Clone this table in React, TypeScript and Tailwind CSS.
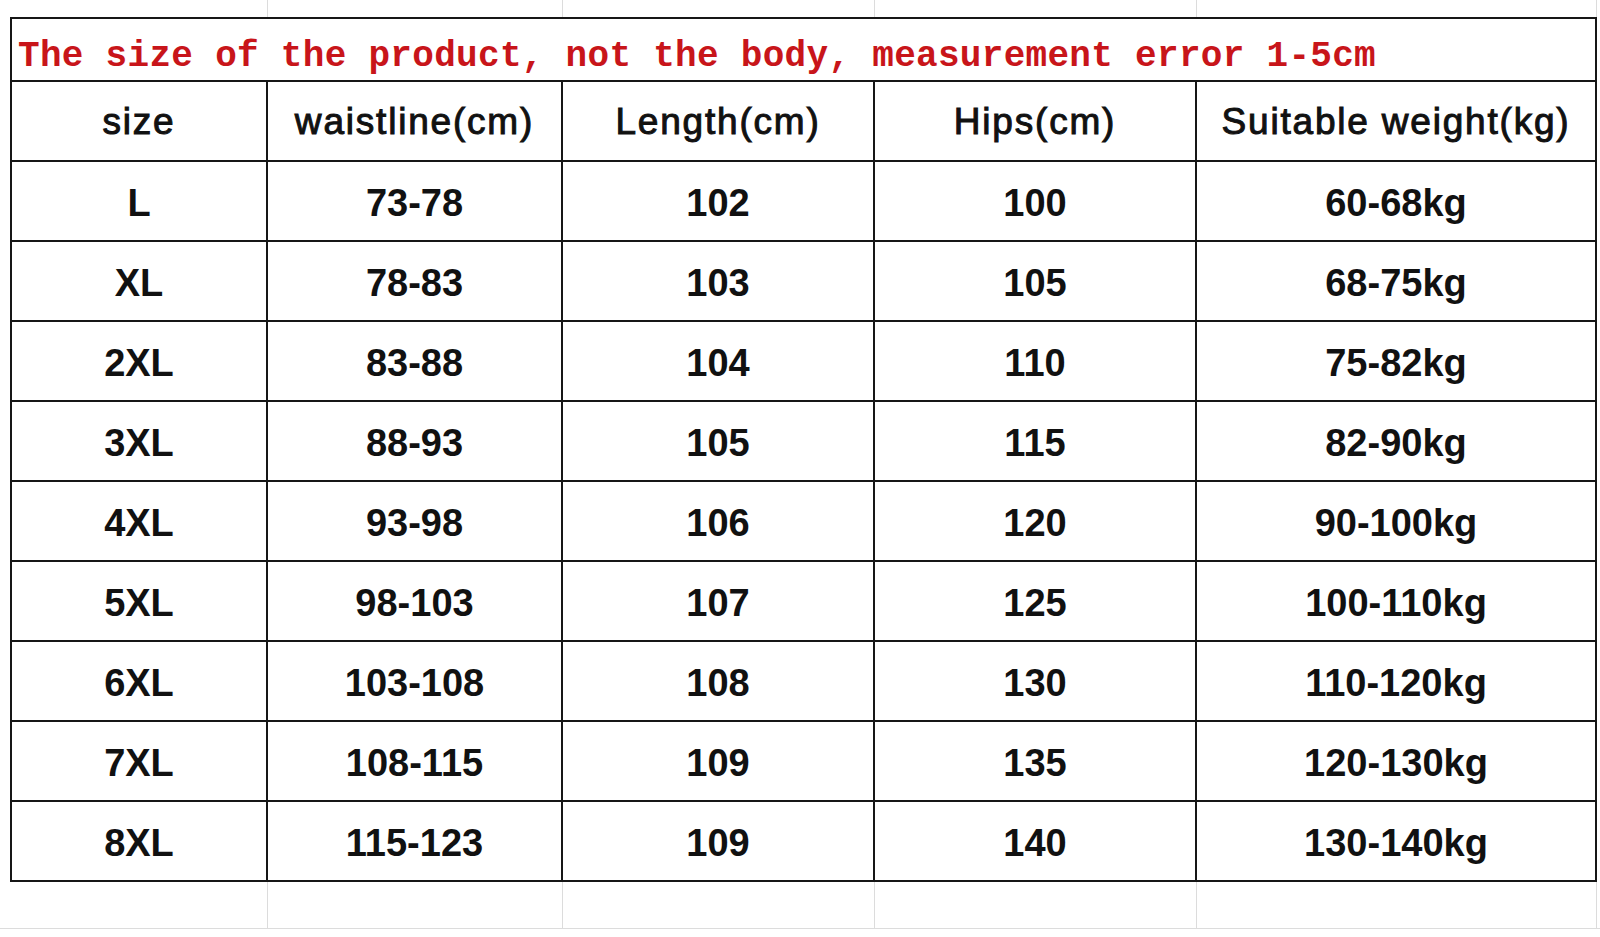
const cols = [256, 295, 312, 322, 400];

const headers = ['size', 'waistline(cm)', 'Length(cm)', 'Hips(cm)', 'Suitable weight(kg)'];

const rows = [
  ['L', '73-78', '102', '100', '60-68kg'],
  ['XL', '78-83', '103', '105', '68-75kg'],
  ['2XL', '83-88', '104', '110', '75-82kg'],
  ['3XL', '88-93', '105', '115', '82-90kg'],
  ['4XL', '93-98', '106', '120', '90-100kg'],
  ['5XL', '98-103', '107', '125', '100-110kg'],
  ['6XL', '103-108', '108', '130', '110-120kg'],
  ['7XL', '108-115', '109', '135', '120-130kg'],
  ['8XL', '115-123', '109', '140', '130-140kg'],
];

// faint spreadsheet grid around the table
function GridStrip({ height, bottomLine }: { height: number; bottomLine?: boolean }) {
  return (
    <div className="flex" style={{ height }}>
      <div className={`w-[268px] shrink-0 border-r border-[#dcdcdc] ${bottomLine ? 'border-b' : ''}`} />
      {cols.slice(1).map((w, i) => (
        <div
          key={i}
          className={`shrink-0 border-r border-[#dcdcdc] ${bottomLine ? 'border-b' : ''}`}
          style={{ width: w }}
        />
      ))}
      <div className={`flex-1 border-[#dcdcdc] ${bottomLine ? 'border-b' : ''}`} />
    </div>
  );
}

export default function App() {
  return (
    <div className="w-[1600px] h-[937px] overflow-hidden bg-white font-['Liberation_Sans',Arial,sans-serif] text-[#111]">
      <GridStrip height={17} />

      <div className="ml-[10px] w-[1587px] border-l-2 border-t-2 border-[#161616]">
        <div className="h-[63px] flex items-center pl-[6px] pt-[14px] border-r-2 border-b-2 border-[#161616]">
          <span className="font-['Liberation_Mono','Courier_New',monospace] font-bold text-[36px] tracking-[0.3px] text-[#c8151a] leading-none whitespace-pre">
            The size of the product, not the body, measurement error 1-5cm
          </span>
        </div>

        <div className="flex h-[80px]">
          {headers.map((h, i) => (
            <div
              key={i}
              className="shrink-0 flex items-center justify-center border-r-2 border-b-2 border-[#161616] text-[37px] tracking-[1.8px] leading-none [-webkit-text-stroke:1px_#111]"
              style={{ width: cols[i] }}
            >
              {h}
            </div>
          ))}
        </div>

        {rows.map((r, ri) => (
          <div key={ri} className="flex h-[80px]">
            {r.map((c, ci) => (
              <div
                key={ci}
                className="shrink-0 flex items-center justify-center pt-[4px] border-r-2 border-b-2 border-[#161616] text-[38px] font-bold leading-none"
                style={{ width: cols[ci] }}
              >
                {c}
              </div>
            ))}
          </div>
        ))}
      </div>

      <GridStrip height={47} bottomLine />
    </div>
  );
}
